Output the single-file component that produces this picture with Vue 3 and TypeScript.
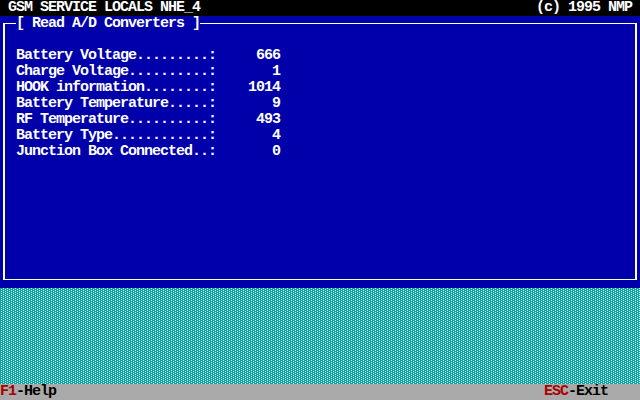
<script setup lang="ts">
const rows: [string, string][] = [
  ['Battery Voltage.........:', '666'],
  ['Charge Voltage..........:', '1'],
  ['HOOK information........:', '1014'],
  ['Battery Temperature.....:', '9'],
  ['RF Temperature..........:', '493'],
  ['Battery Type............:', '4'],
  ['Junction Box Connected..:', '0'],
]
</script>

<template>
  <div class="screen">
    <header class="top">
      <span>GSM SERVICE LOCALS NHE_4</span>
      <span>(c) 1995 NMP</span>
    </header>
    <main class="desk">
      <section class="frame">
        <h1 class="title">[ Read A/D Converters ]</h1>
        <div class="list">
          <div v-for="r in rows" :key="r[0]" class="row">
            <span class="label">{{ r[0] }}</span>
            <span class="value">{{ r[1] }}</span>
          </div>
        </div>
      </section>
    </main>
    <svg class="pattern" width="640" height="96" aria-hidden="true">
      <defs>
        <pattern id="shade" width="4" height="2" patternUnits="userSpaceOnUse">
          <rect width="4" height="2" fill="#00aaaa" />
          <rect x="3" y="0" width="1" height="1" fill="#ffffff" />
          <rect x="1" y="1" width="1" height="1" fill="#ffffff" />
        </pattern>
      </defs>
      <rect width="640" height="96" fill="url(#shade)" />
    </svg>
    <footer class="bottom">
      <span><b class="key">F1</b>-Help</span>
      <span class="exit"><b class="key">ESC</b>-Exit</span>
    </footer>
  </div>
</template>

<style>
html, body { margin: 0; background: #000; overflow: hidden; }
</style>

<style scoped>
.screen {
  width: 640px;
  height: 400px;
  display: flex;
  flex-direction: column;
  font-family: "Liberation Mono", monospace;
  font-size: 15px;
  letter-spacing: -1px;
  line-height: 16px;
  font-weight: 700;
  color: #fff;
  white-space: pre;
}
.top {
  height: 16px;
  flex: none;
  background: #000;
  display: flex;
  justify-content: space-between;
  padding: 0 8px;
}
.desk {
  height: 272px;
  flex: none;
  background: #0000aa;
  padding: 7px 3px 0;
  box-sizing: border-box;
}
.frame {
  height: 257px;
  box-sizing: border-box;
  border-style: solid;
  border-color: #fff;
  border-width: 1px 2px;
  position: relative;
  padding: 24px 0 0 11px;
}
.title {
  position: absolute;
  left: 11px;
  top: -8px;
  width: 184px;
  margin: 0;
  font: inherit;
  background: #0000aa;
  padding: 0;
  height: 16px;
}
.list { display: flex; flex-direction: column; }
.row { display: flex; height: 16px; }
.label { flex: none; width: 200px; }
.value { flex: none; width: 64px; text-align: right; }
.pattern {
  display: block;
  flex: none;
}
.bottom {
  height: 16px;
  flex: none;
  background: #aaaaaa;
  color: #000;
  display: flex;
  justify-content: space-between;
}
.key { color: #aa0000; }
.exit { padding-right: 32px; }
</style>
